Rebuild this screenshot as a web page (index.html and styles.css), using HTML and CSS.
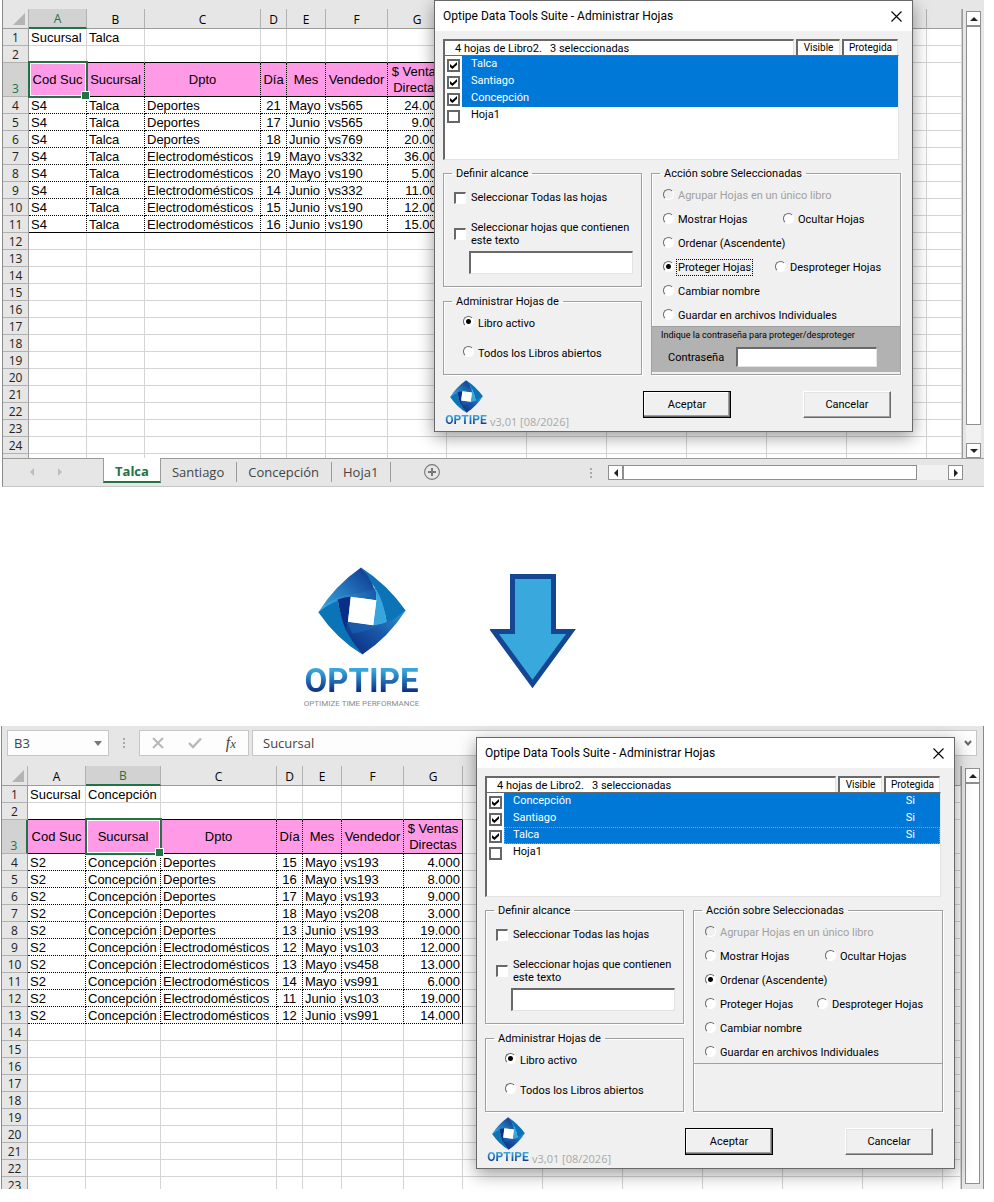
FILE: index.html
```html
<!DOCTYPE html>
<html lang="es">
  <head>
    <meta charset="UTF-8" />
    <title>Optipe Data Tools Suite - Administrar Hojas</title>
    <link rel="stylesheet" href="styles.css">
  </head>
  <body>
    <svg class="sprite" aria-hidden="true">
      <defs>
        <linearGradient id="g-top" x1="0" y1="1" x2="1" y2="0.2">
          <stop offset="0" stop-color="#39a9de" />
          <stop offset="0.5" stop-color="#2478bd" />
          <stop offset="1" stop-color="#0f3a90" />
        </linearGradient>
        <linearGradient id="g-band" x1="0" y1="0.6" x2="1" y2="0.4">
          <stop offset="0" stop-color="#3db0e4" />
          <stop offset="1" stop-color="#1a5caa" />
        </linearGradient>
        <linearGradient id="g-bottom" x1="0" y1="0.8" x2="1" y2="0">
          <stop offset="0" stop-color="#0d2f85" />
          <stop offset="0.5" stop-color="#1959a8" />
          <stop offset="1" stop-color="#2f9bd6" />
        </linearGradient>
      </defs>
      <symbol id="logo" viewBox="17 15 264 263">
        <path fill="#0b74b7" d="M146 16Q224 66 280 145Q255 167 223 180Q208 92 146 16Z" />
        <path fill="#0b74b7" d="M18 150Q45 122 76 112Q90 202 150 277Q73 230 18 150Z" />
        <path fill="url(#g-top)" d="M146 16Q190 60 192 114Q95 88 18 150Q68 70 146 16Z" />
        <path fill="url(#g-band)" d="M18 150Q50 112 105 98Q150 94 189 78Q193 95 192 114L115 104Q60 112 18 150Z" />
        <path fill="#0b2f86" d="M76 112Q96 105 116 104L107 179L102 208Q84 165 76 112Z" />
        <path fill="url(#g-bottom)" d="M280 145Q228 226 150 277Q118 240 99 200L107 179L183 189Q235 180 280 145Z" />
        <path fill="#1c66b0" d="M107 179L183 189Q235 180 280 145Q225 195 122 215Q110 200 107 179Z" opacity="0.6" />
        <path fill="#38a6dd" d="M190 78Q215 120 223 180Q203 188 182 189L192 114Z" />
        <path fill="#fff" d="M115 104L192 114L183 189L107 179Z" />
      </symbol>
      <symbol id="close" viewBox="0 0 11 11">
        <path d="M0.5 0.5L10.5 10.5M10.5 0.5L0.5 10.5" stroke="#000" stroke-width="1.1" fill="none" />
      </symbol>
    </svg>

    <main class="page">
      <section class="excel">
        <div class="workspace">
          <div class="grid-wrap">
            <table class="sheet" id="sheetBefore"></table>
          </div>
          <div class="vscroll">
            <button class="scroll-button up" aria-label="Subir"></button>
            <div class="thumb"></div>
            <div class="track"></div>
            <button class="scroll-button down" aria-label="Bajar"></button>
          </div>
        </div>

        <nav class="tabs">
          <span class="tab-arrows"><i class="arrow-left"></i><i class="arrow-right"></i></span>
          <a href="#" class="tab active">Talca</a>
          <a href="#" class="tab">Santiago</a>
          <a href="#" class="tab">Concepción</a>
          <a href="#" class="tab">Hoja1</a>
          <button class="add-sheet" aria-label="Hoja nueva">
            <svg viewBox="0 0 16 16" width="16" height="16">
              <circle cx="8" cy="8" r="7.4" fill="none" stroke="#777" stroke-width="1.1" />
              <path d="M8 4V12M4 8H12" stroke="#777" stroke-width="2" />
            </svg>
          </button>
          <div class="hscroll">
            <span class="dots"></span>
            <button class="scroll-button left" aria-label="Izquierda"></button>
            <div class="thumb"></div>
            <div class="track"></div>
            <button class="scroll-button right" aria-label="Derecha"></button>
          </div>
        </nav>

        <form class="dialog dialog-before">
          <header class="title-bar">
            <h2>Optipe Data Tools Suite - Administrar Hojas</h2>
            <button type="button" class="close" aria-label="Cerrar"><svg><use href="#close" /></svg></button>
          </header>
          <div class="dialog-body">
            <div class="list-head">
              <span class="summary">4 hojas de Libro2.&nbsp;&nbsp; 3 seleccionadas</span>
              <span class="col-visible">Visible</span>
              <span class="col-protected">Protegida</span>
            </div>
            <ul class="sheet-list">
              <li><label><input type="checkbox" checked><span>Talca</span></label></li>
              <li><label><input type="checkbox" checked><span>Santiago</span></label></li>
              <li><label><input type="checkbox" checked><span>Concepción</span></label></li>
              <li><label><input type="checkbox"><span>Hoja1</span></label></li>
            </ul>

            <div class="groups">
              <div class="groups-left">
                <fieldset class="scope">
                  <legend>Definir alcance</legend>
                  <label class="option"><input type="checkbox"><span>Seleccionar Todas las hojas</span></label>
                  <label class="option"><input type="checkbox"><span>Seleccionar hojas que contienen este texto</span></label>
                  <input type="text" class="text-box" aria-label="Texto a buscar">
                </fieldset>
                <fieldset class="books">
                  <legend>Administrar Hojas de</legend>
                  <label class="option"><input type="radio" name="books1" checked><span>Libro activo</span></label>
                  <label class="option"><input type="radio" name="books1"><span>Todos los Libros abiertos</span></label>
                </fieldset>
              </div>
              <fieldset class="actions">
                <legend>Acción sobre Seleccionadas</legend>
                <div class="action-list">
                  <div class="action-row"><label class="option disabled"><input type="radio" name="action1" disabled><span>Agrupar Hojas en un único libro</span></label></div>
                  <div class="action-row pair">
                    <label class="option"><input type="radio" name="action1"><span>Mostrar Hojas</span></label>
                    <label class="option"><input type="radio" name="action1"><span>Ocultar Hojas</span></label>
                  </div>
                  <div class="action-row"><label class="option"><input type="radio" name="action1"><span>Ordenar (Ascendente)</span></label></div>
                  <div class="action-row pair protect">
                    <label class="option"><input type="radio" name="action1" checked><span class="focused">Proteger Hojas</span></label>
                    <label class="option"><input type="radio" name="action1"><span>Desproteger Hojas</span></label>
                  </div>
                  <div class="action-row"><label class="option"><input type="radio" name="action1"><span>Cambiar nombre</span></label></div>
                  <div class="action-row"><label class="option"><input type="radio" name="action1"><span>Guardar en archivos Individuales</span></label></div>
                </div>
                <div class="detail password">
                  <p>Indique la contraseña para proteger/desproteger</p>
                  <label><span>Contraseña</span><input type="password" class="text-box"></label>
                </div>
              </fieldset>
            </div>

            <footer class="dialog-footer">
              <div class="brand">
                <div class="brand-mark">
                  <svg><use href="#logo" /></svg>
                  <strong>OPTIPE</strong>
                </div>
                <span class="version">v3,01 [08/2026]</span>
              </div>
              <div class="buttons">
                <button type="button" class="button default">Aceptar</button>
                <button type="button" class="button">Cancelar</button>
              </div>
            </footer>
          </div>
        </form>
      </section>

      <section class="transition">
        <div class="big-brand">
          <svg><use href="#logo" /></svg>
          <strong>OPTIPE</strong>
          <small>OPTIMIZE TIME PERFORMANCE</small>
        </div>
        <svg class="down-arrow" viewBox="0 0 86 115">
          <path d="M22.5 2.5H63.5V57.5H81L42.5 110L4 57.5H22.5Z" fill="#38a8dd" stroke="#154694" stroke-width="5" />
        </svg>
      </section>

      <section class="excel after">
        <div class="formula-bar">
          <div class="name-box"><span>B3</span><i></i></div>
          <span class="dots"></span>
          <div class="fx-box">
            <svg viewBox="0 0 12 12" width="12" height="12"><path d="M1 1L11 11M11 1L1 11" stroke="#b8b8b8" stroke-width="2" /></svg>
            <svg viewBox="0 0 14 12" width="14" height="12"><path d="M1 6L5 10L13 1.5" fill="none" stroke="#b8b8b8" stroke-width="2.4" /></svg>
            <span class="fx">f<small>x</small></span>
          </div>
          <div class="formula"><span>Sucursal</span>
            <svg viewBox="0 0 8 6" width="8" height="6"><path d="M1 1L4 4.5L7 1" fill="none" stroke="#666" stroke-width="2" /></svg>
          </div>
        </div>
        <div class="workspace">
          <div class="grid-wrap">
            <table class="sheet" id="sheetAfter"></table>
          </div>
          <div class="vscroll">
            <button class="scroll-button up" aria-label="Subir"></button>
            <div class="thumb"></div>
          </div>
        </div>

        <form class="dialog dialog-after">
          <header class="title-bar">
            <h2>Optipe Data Tools Suite - Administrar Hojas</h2>
            <button type="button" class="close" aria-label="Cerrar"><svg><use href="#close" /></svg></button>
          </header>
          <div class="dialog-body">
            <div class="list-head">
              <span class="summary">4 hojas de Libro2.&nbsp;&nbsp; 3 seleccionadas</span>
              <span class="col-visible">Visible</span>
              <span class="col-protected">Protegida</span>
            </div>
            <ul class="sheet-list">
              <li><label><input type="checkbox" checked><span>Concepción<em>Si</em></span></label></li>
              <li><label><input type="checkbox" checked><span>Santiago<em>Si</em></span></label></li>
              <li><label><input type="checkbox" checked><span class="current">Talca<em>Si</em></span></label></li>
              <li><label><input type="checkbox"><span>Hoja1</span></label></li>
            </ul>

            <div class="groups">
              <div class="groups-left">
                <fieldset class="scope">
                  <legend>Definir alcance</legend>
                  <label class="option"><input type="checkbox"><span>Seleccionar Todas las hojas</span></label>
                  <label class="option"><input type="checkbox"><span>Seleccionar hojas que contienen este texto</span></label>
                  <input type="text" class="text-box" aria-label="Texto a buscar">
                </fieldset>
                <fieldset class="books">
                  <legend>Administrar Hojas de</legend>
                  <label class="option"><input type="radio" name="books2" checked><span>Libro activo</span></label>
                  <label class="option"><input type="radio" name="books2"><span>Todos los Libros abiertos</span></label>
                </fieldset>
              </div>
              <fieldset class="actions">
                <legend>Acción sobre Seleccionadas</legend>
                <div class="action-list">
                  <div class="action-row"><label class="option disabled"><input type="radio" name="action2" disabled><span>Agrupar Hojas en un único libro</span></label></div>
                  <div class="action-row pair">
                    <label class="option"><input type="radio" name="action2"><span>Mostrar Hojas</span></label>
                    <label class="option"><input type="radio" name="action2"><span>Ocultar Hojas</span></label>
                  </div>
                  <div class="action-row"><label class="option"><input type="radio" name="action2" checked><span>Ordenar (Ascendente)</span></label></div>
                  <div class="action-row pair protect">
                    <label class="option"><input type="radio" name="action2"><span>Proteger Hojas</span></label>
                    <label class="option"><input type="radio" name="action2"><span>Desproteger Hojas</span></label>
                  </div>
                  <div class="action-row"><label class="option"><input type="radio" name="action2"><span>Cambiar nombre</span></label></div>
                  <div class="action-row"><label class="option"><input type="radio" name="action2"><span>Guardar en archivos Individuales</span></label></div>
                </div>
                <div class="detail"></div>
              </fieldset>
            </div>

            <footer class="dialog-footer">
              <div class="brand">
                <div class="brand-mark">
                  <svg><use href="#logo" /></svg>
                  <strong>OPTIPE</strong>
                </div>
                <span class="version">v3,01 [08/2026]</span>
              </div>
              <div class="buttons">
                <button type="button" class="button default">Aceptar</button>
                <button type="button" class="button">Cancelar</button>
              </div>
            </footer>
          </div>
        </form>
      </section>
    </main>
    <script src="sheets.js"></script>
  </body>
</html>
```

FILE: styles.css
```css
:root {
  --chrome: #e6e6e6;
  --chrome-selected: #d2d2d2;
  --head-line: #9b9b9b;
  --head-split: #b1b1b1;
  --grid-line: #d4d4d4;
  --excel-green: #217346;
  --pink: #ff9be6;
  --face: #f0f0f0;
  --shadow: #696969;
  --edge: #a0a0a0;
  --select-blue: #0078d7;

  --ui-font: 'Open Sans', 'Noto Sans', sans-serif;
  --cell-font: 'Liberation Sans', Arial, sans-serif;
  --dialog-font: Tahoma, Roboto, 'Open Sans', sans-serif;
  --narrow-font: Roboto, 'Liberation Sans', sans-serif;
}

* {
  box-sizing: border-box;
}

body {
  margin: 0;
  background: #fff;
  color: #000;
  font-family: var(--ui-font);
  font-size: 12px;
}

button {
  padding: 0;
  font: inherit;
}

.sprite {
  position: absolute;
  width: 0;
  height: 0;
}

.page {
  margin: 0 10px 12px 2px;
}

/* Excel window */
.excel {
  position: relative;
  border-left: 1px solid #8a8a8a;
  border-bottom: 1px solid #c6c6c6;
  background: var(--chrome);
}

.excel.after {
  margin-left: -1px;
  border-right: 1px solid #8a8a8a;
  border-bottom: none;
}

.workspace {
  display: flex;
  padding-top: 9px;
}

.after .workspace {
  padding-top: 10px;
}

.grid-wrap {
  flex: 1;
  overflow: hidden;
  border-right: 1px solid var(--head-line);
}

.sheet {
  width: 100%;
  table-layout: fixed;
  border-collapse: separate;
  border-spacing: 0;
  background: #fff;
  font-family: var(--cell-font);
  font-size: 13px;
  line-height: 15px;
}

.sheet th,
.sheet td {
  height: 17px;
  padding: 1px 2px 0;
  border-right: 1px solid var(--grid-line);
  border-bottom: 1px solid var(--grid-line);
  font-weight: normal;
  white-space: nowrap;
}

.sheet thead th {
  height: 20px;
  border-right-color: var(--head-split);
  border-bottom-color: var(--head-line);
  background: var(--chrome);
  font-family: var(--ui-font);
  font-size: 12px;
}

.sheet thead th.selected {
  border-bottom: 2px solid var(--excel-green);
  background: var(--chrome-selected);
  color: var(--excel-green);
}

.corner::before {
  content: '';
  display: block;
  width: 12px;
  height: 12px;
  margin-left: 8px;
  background: #b4b4b4;
  clip-path: polygon(100% 0, 100% 100%, 0 100%);
}

.sheet tbody th {
  padding: 1px 0 0;
  border-right-color: var(--head-line);
  border-bottom-color: var(--head-split);
  background: var(--chrome);
  color: #222;
  font-family: var(--ui-font);
  font-size: 12px;
  vertical-align: bottom;
}

.sheet tbody th.selected {
  background: var(--chrome-selected);
  color: var(--excel-green);
}

.after .sheet tbody th.selected {
  border-right: 2px solid var(--excel-green);
}

.sheet tr.above td.in {
  border-bottom-color: #000;
}

.sheet tr.titles td {
  height: 34px;
}

.sheet tr.titles td.in {
  padding-top: 0;
  border-right: 1px dotted #000;
  border-bottom-color: #000;
  background: var(--pink);
  line-height: 16px;
  text-align: center;
}

.sheet tr.data td.in {
  border-right: 1px dotted #000;
  border-bottom: 1px dotted #000;
}

.sheet tr td.in.last {
  border-right-style: solid;
}

.sheet tr.above td.in.last {
  border-right-color: var(--grid-line);
}

.sheet tr.closing td.in {
  border-bottom-style: solid;
}

.sheet td.center {
  text-align: center;
}

.sheet tr.data td.number {
  text-align: right;
}

.sheet td.selected {
  position: relative;
}

.sheet td.selected::before {
  content: '';
  position: absolute;
  z-index: 1;
  inset: -2px -2px -2px -1px;
  border: 2px solid var(--excel-green);
  box-shadow: inset 0 0 0 1px #fff;
}

.sheet td.selected::after {
  content: '';
  position: absolute;
  z-index: 1;
  right: -4px;
  bottom: -4px;
  width: 7px;
  height: 7px;
  border: 1px solid #fff;
  background: var(--excel-green);
}

.sheet tr.cut th,
.sheet tr.cut td {
  height: auto;
  padding-top: 0;
  border-bottom: none;
}

.sheet tr.cut span {
  display: block;
  height: 4px;
  overflow: hidden;
}

.after .sheet tr.cut span {
  height: 12px;
  line-height: 17px;
}

/* Scroll bars */
.vscroll {
  display: flex;
  flex-direction: column;
  width: 21px;
  padding: 2px 3px 0;
}

.scroll-button {
  display: flex;
  align-items: center;
  justify-content: center;
  width: 15px;
  height: 15px;
  border: 1px solid #8f8f8f;
  background: #fff;
}

.scroll-button::before {
  content: '';
  border: 4px solid transparent;
}

.scroll-button.up::before {
  border-top: none;
  border-bottom-color: #222;
}

.scroll-button.down::before {
  border-bottom: none;
  border-top-color: #222;
}

.scroll-button.left::before {
  border-left: none;
  border-right-color: #222;
}

.scroll-button.right::before {
  border-right: none;
  border-left-color: #222;
}

.thumb {
  border: 1px solid #8f8f8f;
  background: #fff;
}

.track {
  background: #f1f1f1;
}

.vscroll .thumb {
  flex: 1;
}

.vscroll .track {
  height: 18px;
}

.after .vscroll {
  padding-bottom: 5px;
}

/* Sheet tabs */
.tabs {
  display: flex;
  align-items: flex-start;
  height: 28px;
  border-top: 1px solid var(--head-line);
  font-size: 13px;
}

.tab-arrows {
  display: flex;
  gap: 24px;
  width: 100px;
  padding: 9px 0 0 27px;
}

.tab-arrows i {
  border: 4px solid transparent;
}

.tab-arrows .arrow-left {
  border-right-color: #bdbdbd;
  border-left: none;
}

.tab-arrows .arrow-right {
  border-left-color: #bdbdbd;
  border-right: none;
}

.tab {
  margin-top: 3px;
  padding: 0 12px 0 11px;
  border-right: 1px solid var(--head-line);
  color: #444;
  line-height: 20px;
  text-decoration: none;
}

.tab.active {
  margin-top: -1px;
  padding: 3px 11px 0;
  border-left: 1px solid var(--head-line);
  border-bottom: 2px solid var(--excel-green);
  background: #fff;
  color: var(--excel-green);
  font-weight: bold;
}

.add-sheet {
  display: flex;
  margin: 5px 0 0 33px;
  border: none;
  background: none;
}

.hscroll {
  display: flex;
  align-items: center;
  width: 373px;
  height: 15px;
  margin: 6px 21px 0 auto;
}

.hscroll .thumb {
  flex: 1;
  height: 15px;
}

.hscroll .track {
  width: 31px;
  height: 15px;
}

.dots {
  width: 2px;
  height: 10px;
  background: repeating-linear-gradient(#aaa 0 2px, transparent 2px 4px);
}

.hscroll .dots {
  margin-right: 16px;
}

/* Formula bar */
.formula-bar {
  display: flex;
  align-items: center;
  padding: 4px 6px 0 5px;
  color: #444;
  font-size: 13px;
}

.name-box,
.fx-box,
.formula {
  display: flex;
  align-items: center;
  justify-content: space-between;
  height: 26px;
  border: 1px solid #c6c6c6;
  background: #fdfdfd;
}

.name-box {
  width: 102px;
  padding: 0 6px;
}

.name-box i {
  border: 4px solid transparent;
  border-top: 5px solid #777;
  border-bottom: none;
}

.formula-bar .dots {
  margin: 0 14px;
}

.fx-box {
  width: 110px;
  padding: 0 12px;
}

.fx {
  font-family: 'Liberation Serif', serif;
  font-size: 16px;
  font-style: italic;
  line-height: 17px;
}

.fx small {
  font-size: 13px;
}

.formula {
  flex: 1;
  margin-left: 3px;
  padding: 0 4px 0 10px;
}

/* Dialog */
.dialog {
  position: absolute;
  z-index: 2;
  width: 479px;
  border: 1px solid var(--shadow);
  background: var(--face);
  box-shadow: 0 5px 16px rgba(0, 0, 0, 0.4);
  font-family: var(--dialog-font);
  font-size: 11px;
  line-height: 13px;
}

.dialog-before {
  top: 0;
  left: 431px;
}

.dialog-after {
  top: 11px;
  left: 474px;
}

.title-bar {
  display: flex;
  align-items: center;
  justify-content: space-between;
  height: 30px;
  padding: 0 10px 0 8px;
  background: #fff;
}

.title-bar h2 {
  margin: 0;
  font-size: 12px;
  font-weight: normal;
}

.close {
  display: flex;
  border: none;
  background: none;
}

.close svg {
  width: 11px;
  height: 11px;
}

.dialog-body {
  padding: 8px 11px 3px 8px;
}

.list-head {
  display: flex;
  gap: 2px;
  height: 16px;
  margin-right: 3px;
  overflow: hidden;
}

.list-head span {
  border: 1px solid var(--shadow);
  border-width: 2px 1px 0 2px;
  border-right-color: #e3e3e3;
  background: #fff;
}

.list-head .summary {
  flex: 1;
  padding: 1px 0 0 10px;
}

.col-visible,
.col-protected {
  width: 44px;
  font-size: 10px;
  text-align: center;
}

.list-head .col-protected {
  width: 56px;
}

.sheet-list {
  height: 105px;
  margin: 0 2px 0 0;
  padding: 0;
  border: 1px solid #e3e3e3;
  border-top-color: var(--shadow);
  border-left: 2px solid var(--shadow);
  background: #fff;
  list-style: none;
}

.sheet-list label {
  display: flex;
  align-items: center;
  gap: 2px;
  height: 17px;
  padding-left: 2px;
}

.sheet-list input {
  flex: none;
  width: 13px;
  height: 13px;
  margin: 2px 0 0;
  border: 2px solid #666;
  background: #fff;
  appearance: none;
}

.sheet-list input:checked::before {
  content: '';
  display: block;
  width: 7px;
  height: 7px;
  margin: 1px;
  background: #000;
  clip-path: polygon(0 30%, 35% 60%, 100% 0, 100% 40%, 35% 100%, 0 70%);
}

.sheet-list span {
  flex: 1;
  display: flex;
  justify-content: space-between;
  height: 17px;
  padding: 1px 25px 0 9px;
}

.sheet-list em {
  font-style: normal;
}

.sheet-list input:checked + span {
  background: var(--select-blue);
  color: #fff;
}

.sheet-list .current {
  outline: 1px dotted #ff8728;
  outline-offset: -1px;
}

.groups {
  display: grid;
  grid-template-columns: 199px 1fr;
  gap: 9px;
  margin-top: 7px;
}

.groups-left {
  display: flex;
  flex-direction: column;
  gap: 8px;
}

fieldset {
  min-width: 0;
  margin: 0;
  padding: 0;
  border: 1px solid var(--edge);
  box-shadow: 1px 1px 0 #fff, inset 1px 1px 0 #fff;
}

legend {
  margin-left: 8px;
  padding: 0 4px;
}

.option {
  display: flex;
  align-items: center;
  gap: 5px;
}

.option input {
  flex: none;
  margin: 0;
  appearance: none;
}

.option input[type='checkbox'] {
  width: 12px;
  height: 12px;
  border: 1px solid #fff;
  border-top: 2px solid var(--shadow);
  border-left: 2px solid var(--shadow);
  background: #fff;
}

.option input[type='radio'] {
  width: 11px;
  height: 11px;
  margin-bottom: 3px;
  border: 1px solid #fff;
  border-top-color: var(--shadow);
  border-left-color: var(--shadow);
  border-radius: 50%;
  background: #fff;
}

.option input[type='radio']:checked {
  background: radial-gradient(circle, #000 0 2px, #fff 3px);
}

.option input[type='radio']:disabled {
  background: var(--face);
}

.option.disabled {
  color: #a0a0a0;
}

.focused {
  outline: 1px dotted #000;
  outline-offset: 1px;
}

.scope {
  padding: 11px 8px 12px 10px;
}

.scope legend {
  margin-left: -2px;
}

.scope .option + .option {
  margin-top: 17px;
}

.text-box {
  border: 1px solid #e3e3e3;
  border-top: 2px solid var(--shadow);
  border-left: 2px solid var(--shadow);
  background: #fff;
  font: inherit;
}

.scope .text-box {
  display: block;
  width: 164px;
  height: 23px;
  margin: 4px 0 0 15px;
}

.books {
  padding: 8px 8px 14px 19px;
}

.books legend {
  margin-left: -11px;
}

.books .option {
  gap: 4px;
}

.books .option + .option {
  margin-top: 16px;
}

.action-list {
  display: flex;
  flex-direction: column;
  gap: 11px;
  padding: 9px 0 4px 11px;
}

.action-row {
  display: flex;
  height: 13px;
}

.action-row .option {
  gap: 4px;
}

.pair .option:first-child {
  width: 120px;
}

.protect .option:first-child {
  width: 112px;
}

.detail {
  height: 46px;
  border-top: 1px solid var(--edge);
}

.password {
  padding: 2px 0 0 9px;
  background: #b2b2b2;
}

.password p {
  margin: 0;
  font-size: 9px;
  line-height: 12px;
}

.password label {
  display: flex;
  align-items: center;
  justify-content: space-between;
  margin-top: 6px;
  padding: 0 23px 0 7px;
}

.password .text-box {
  width: 141px;
  height: 20px;
}

.dialog-footer {
  display: grid;
  grid-template-columns: 200px 1fr;
  padding-top: 5px;
}

.brand {
  display: flex;
  align-items: flex-end;
  gap: 3px;
  padding-left: 2px;
}

.brand-mark {
  display: flex;
  flex-direction: column;
  align-items: center;
  width: 42px;
}

.brand-mark svg {
  width: 33px;
  height: 33px;
}

.brand-mark strong,
.big-brand strong {
  background: linear-gradient(#38a6dd 20%, #0b2f86 80%);
  background-clip: text;
  color: transparent;
  font-family: var(--narrow-font);
}

.brand-mark strong {
  font-size: 12px;
  line-height: 15px;
}

.version {
  color: #a8a8a8;
  font-family: var(--ui-font);
}

.buttons {
  display: flex;
  gap: 72px;
  padding-top: 11px;
}

.button {
  width: 88px;
  height: 27px;
  border: 1px solid;
  border-color: #fff var(--shadow) var(--shadow) #fff;
  background: var(--face);
  box-shadow: inset -1px -1px 0 var(--edge), inset 1px 1px 0 #e3e3e3;
  color: #000;
}

.button.default {
  border: 1px solid #000;
  box-shadow: inset -1px -1px 0 var(--shadow), inset -2px -2px 0 var(--edge), inset 1px 1px 0 #fff;
}

/* Logo and arrow between the two windows */
.transition {
  display: flex;
  gap: 72px;
  padding: 80px 0 17px 303px;
}

.big-brand {
  display: flex;
  flex-direction: column;
  align-items: center;
  width: 113px;
}

.big-brand svg {
  width: 88px;
  height: 88px;
}

.big-brand strong {
  margin-top: 8px;
  font-size: 33px;
  line-height: 36px;
}

.big-brand small {
  color: #8c8c8c;
  font-family: var(--narrow-font);
  font-size: 8px;
  line-height: 10px;
  white-space: nowrap;
}

.down-arrow {
  width: 86px;
  height: 115px;
  margin-top: 7px;
}
```

FILE: sheets.js
```js
const TITLES = ['Cod Suc', 'Sucursal', 'Dpto', 'Día', 'Mes', 'Vendedor', '$ Ventas<br>Directas'];

const before = {
  id: 'sheetBefore',
  branch: 'Talca',
  code: 'S4',
  widths: [58, 58, 116, 26, 39, 62, 59, 80, 80, 80, 80, 80, 80],
  selected: 0,
  lastRow: 24,
  spareRow: true,
  closed: true,
  rows: [
    ['Deportes', 21, 'Mayo', 'vs565', '24.000'],
    ['Deportes', 17, 'Junio', 'vs565', '9.000'],
    ['Deportes', 18, 'Junio', 'vs769', '20.000'],
    ['Electrodomésticos', 19, 'Mayo', 'vs332', '36.000'],
    ['Electrodomésticos', 20, 'Mayo', 'vs190', '5.000'],
    ['Electrodomésticos', 14, 'Junio', 'vs332', '11.000'],
    ['Electrodomésticos', 15, 'Junio', 'vs190', '12.000'],
    ['Electrodomésticos', 16, 'Junio', 'vs190', '15.000'],
  ],
};

const after = {
  id: 'sheetAfter',
  branch: 'Concepción',
  code: 'S2',
  widths: [58, 75, 116, 26, 39, 62, 59, 80, 80, 80, 80, 80, 80],
  selected: 1,
  lastRow: 23,
  spareRow: false,
  closed: false,
  rows: [
    ['Deportes', 15, 'Mayo', 'vs193', '4.000'],
    ['Deportes', 16, 'Mayo', 'vs193', '8.000'],
    ['Deportes', 17, 'Mayo', 'vs193', '9.000'],
    ['Deportes', 18, 'Mayo', 'vs208', '3.000'],
    ['Deportes', 13, 'Junio', 'vs193', '19.000'],
    ['Electrodomésticos', 12, 'Mayo', 'vs103', '12.000'],
    ['Electrodomésticos', 13, 'Mayo', 'vs458', '13.000'],
    ['Electrodomésticos', 14, 'Mayo', 'vs991', '6.000'],
    ['Electrodomésticos', 11, 'Junio', 'vs103', '19.000'],
    ['Electrodomésticos', 12, 'Junio', 'vs991', '14.000'],
  ],
};

function rowValues(sheet, n) {
  if (n === 1) return ['Sucursal', sheet.branch];
  if (n === 3) return TITLES;
  const record = sheet.rows[n - 4];
  return record ? [sheet.code, sheet.branch, ...record] : [];
}

function rowClass(sheet, n) {
  if (n === 2) return 'above';
  if (n === 3) return 'titles';
  if (n > sheet.lastRow || (n === sheet.lastRow && !sheet.spareRow)) return 'cut';
  const last = sheet.rows.length + 3;
  if (n > 3 && n <= last) return n === last && sheet.closed ? 'data closing' : 'data';
  return '';
}

function render(sheet) {
  // one extra column takes whatever width is left
  const count = sheet.widths.length + 1;
  const rowCount = sheet.lastRow + (sheet.spareRow ? 1 : 0);
  let html = '<colgroup><col style="width: 26px">';
  html += sheet.widths.map((w) => `<col style="width: ${w}px">`).join('') + '<col></colgroup>';

  html += '<thead><tr><th class="corner"></th>';
  for (let c = 0; c < count; c++) {
    html += `<th class="${c === sheet.selected ? 'selected' : ''}">${'ABCDEFG'[c] || ''}</th>`;
  }
  html += '</tr></thead><tbody>';

  for (let n = 1; n <= rowCount; n++) {
    const values = rowValues(sheet, n);
    const type = rowClass(sheet, n);
    const marked = type && type !== 'cut';
    const label = n <= sheet.lastRow ? n : '';
    html += `<tr class="${type}"><th class="${n === 3 ? 'selected' : ''}"><span>${label}</span></th>`;
    for (let c = 0; c < count; c++) {
      const names = [];
      if (marked && c < 7) names.push('in');
      if (marked && c === 6) names.push('last', 'number');
      if (c === 3) names.push('center');
      if (n === 3 && c === sheet.selected) names.push('selected');
      html += `<td class="${names.join(' ')}">${values[c] ?? ''}</td>`;
    }
    html += '</tr>';
  }
  document.getElementById(sheet.id).innerHTML = html + '</tbody>';
}

render(before);
render(after);
```
